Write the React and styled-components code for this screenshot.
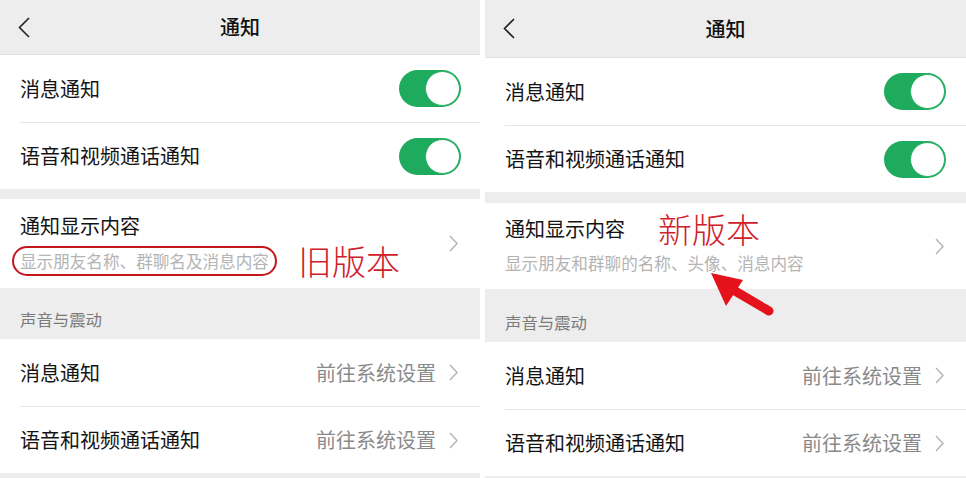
import React from "react";
import styled, { createGlobalStyle } from "styled-components";

const Global = createGlobalStyle`
  html, body { margin: 0; padding: 0; background: #ffffff; }
  body { font-family: "Noto Sans CJK SC", "Noto Sans", sans-serif; -webkit-font-smoothing: antialiased; }
`;

const Page = styled.div`
  display: flex;
  gap: 5px;
  width: 966px;
  height: 478px;
  overflow: hidden;
  background: #ffffff;
`;

const Panel = styled.div`
  position: relative;
  display: flex;
  flex-direction: column;
  width: ${(p) => p.$w}px;
  height: 478px;
  background: #ededed;
  flex: none;
`;

const NavBar = styled.div`
  box-sizing: border-box;
  display: grid;
  grid-template-columns: 1fr auto 1fr;
  align-items: center;
  height: ${(p) => p.$h}px;
  padding: 0 18px;
  background: #ededed;
  border-bottom: 1px solid #e2e2e2;
`;

const Back = styled.svg`
  width: 12px;
  height: 21px;
  justify-self: start;
`;

const Title = styled.div`
  font-size: 20px;
  font-weight: 500;
  color: #111;
  line-height: 28px;
`;

const Group = styled.div`
  background: #ffffff;
  padding-left: 20px;
`;

const Row = styled.div`
  box-sizing: border-box;
  display: flex;
  align-items: center;
  justify-content: space-between;
  height: ${(p) => p.$h}px;
  padding-right: ${(p) => p.$pr}px;
  border-top: ${(p) => (p.$divider ? "1px solid #e7e7e7" : "none")};
`;

const Label = styled.span`
  font-size: 20px;
  color: #141414;
  line-height: 28px;
`;

const Track = styled.div`
  box-sizing: border-box;
  display: flex;
  justify-content: flex-end;
  align-items: center;
  width: 62px;
  height: 37px;
  padding: 1px;
  border-radius: 19px;
  background: #1fab5d;
`;

const Knob = styled.div`
  box-sizing: border-box;
  width: 35px;
  height: 35px;
  border-radius: 50%;
  background: #ffffff;
  border: 1.5px solid #23b062;
`;

const Gap = styled.div`
  height: ${(p) => p.$h}px;
  flex: none;
`;

const DisplayRow = styled.div`
  position: relative;
  box-sizing: border-box;
  display: flex;
  align-items: center;
  justify-content: space-between;
  height: ${(p) => p.$h}px;
  padding-right: 22px;
`;

const DisplayText = styled.div`
  display: flex;
  flex-direction: column;
  gap: ${(p) => p.$gap}px;
`;

const Line = styled.div`
  display: flex;
  align-items: center;
  height: 30px;
  white-space: nowrap;
`;

const Sub = styled.span`
  font-size: 16.6px;
  color: #b4b4b4;
  line-height: 26px;
  ${(p) =>
    p.$circled
      ? `
    margin-left: -8px;
    padding: 0 6px 0 6px;
    border: 2px solid #c4161c;
    border-radius: 15px;
  `
      : ""}
`;

const Stamp = styled.span`
  margin-left: ${(p) => p.$ml}px;
  font-size: 34px;
  font-weight: 300;
  color: #d0202a;
  line-height: 34px;
`;

const Chevron = styled.svg`
  width: 9px;
  height: 17px;
  flex: none;
`;

const Section = styled.div`
  box-sizing: border-box;
  display: flex;
  align-items: flex-end;
  height: ${(p) => p.$h}px;
  padding: 0 20px 8px;
  font-size: 16.4px;
  line-height: 24px;
  color: #7b7b7b;
`;

const Value = styled.span`
  display: flex;
  align-items: center;
  gap: 13px;
  font-size: 20px;
  color: #8a8a8a;
  line-height: 28px;
`;

const Arrow = styled.svg`
  position: absolute;
  left: ${(p) => p.$x}px;
  top: ${(p) => p.$y}px;
  width: 70px;
  height: 46px;
  overflow: visible;
`;

const BackIcon = () => (
  <Back viewBox="0 0 12 21">
    <polyline points="11,1 1.5,10.5 11,20" fill="none" stroke="#222" strokeWidth="1.6" />
  </Back>
);

const ChevronIcon = () => (
  <Chevron viewBox="0 0 9 17">
    <polyline points="1,1 8,8.5 1,16" fill="none" stroke="#b6b6b6" strokeWidth="1.5" />
  </Chevron>
);

const Switch = () => (
  <Track>
    <Knob />
  </Track>
);

const PanelView = ({ cfg, isNew }) => (
  <Panel $w={cfg.w}>
    <NavBar $h={cfg.nav}>
      <BackIcon />
      <Title>通知</Title>
      <span />
    </NavBar>
    <Group>
      <Row $h={cfg.row} $pr={cfg.pr}>
        <Label>消息通知</Label>
        <Switch />
      </Row>
      <Row $h={cfg.row} $pr={cfg.pr} $divider>
        <Label>语音和视频通话通知</Label>
        <Switch />
      </Row>
    </Group>
    <Gap $h={cfg.gap} />
    <Group>
      <DisplayRow $h={cfg.display}>
        <DisplayText $gap={cfg.subGap}>
          <Line>
            <Label>通知显示内容</Label>
            {isNew && <Stamp $ml={33}>新版本</Stamp>}
          </Line>
          <Line>
            {isNew ? (
              <Sub>显示朋友和群聊的名称、头像、消息内容</Sub>
            ) : (
              <>
                <Sub $circled>显示朋友名称、群聊名及消息内容</Sub>
                <Stamp $ml={21}>旧版本</Stamp>
              </>
            )}
          </Line>
        </DisplayText>
        <ChevronIcon />
        {isNew && (
          <Arrow $x={201} $y={68} viewBox="0 0 70 46">
            <line x1="24" y1="17" x2="63" y2="40" stroke="#e3121b" strokeWidth="9" strokeLinecap="round" />
            <polygon points="5,2 37,9 20,35" fill="#e3121b" />
          </Arrow>
        )}
      </DisplayRow>
    </Group>
    <Section $h={cfg.section}>声音与震动</Section>
    <Group>
      <Row $h={cfg.row} $pr={22}>
        <Label>消息通知</Label>
        <Value>
          前往系统设置
          <ChevronIcon />
        </Value>
      </Row>
      <Row $h={cfg.row} $pr={22} $divider>
        <Label>语音和视频通话通知</Label>
        <Value>
          前往系统设置
          <ChevronIcon />
        </Value>
      </Row>
    </Group>
  </Panel>
);

const LEFT = { w: 480, nav: 55, row: 67, gap: 10, display: 89, section: 51, pr: 19, subGap: 5 };
const RIGHT = { w: 481, nav: 58, row: 67, gap: 11, display: 86, section: 53, pr: 20, subGap: 4 };

export default function App() {
  return (
    <>
      <Global />
      <Page>
        <PanelView cfg={LEFT} />
        <PanelView cfg={RIGHT} isNew />
      </Page>
    </>
  );
}
